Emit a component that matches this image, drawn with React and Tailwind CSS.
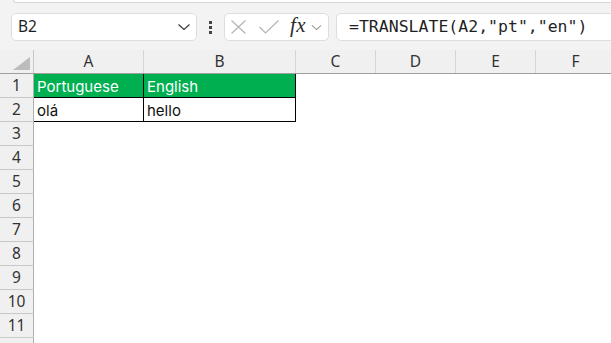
import React from 'react';

const COLS = ['A', 'B', 'C', 'D', 'E', 'F'];
const WIDTHS = ['w-[110px]', 'w-[152px]', 'w-[80px]', 'w-[80px]', 'w-[80px]', 'w-[80px]'];

const Chevron = ({ className, color }) => (
  <svg className={className} viewBox="0 0 12 6" fill="none">
    <path d="M0.5 0.5 L6 5.5 L11.5 0.5" stroke={color} strokeWidth="1.3" />
  </svg>
);

const Toolbar = () => (
  <div className="bg-[#f3f3f3] h-[50px] flex flex-col">
    {/* edge of the ribbon panel above */}
    <div className="ml-[13px] h-[3px] bg-white border-b border-l border-[#d6d6d6] rounded-bl-[5px]" />
    <div className="flex items-center mt-[10px] h-[28px]">
      {/* Name box */}
      <div className="ml-[11px] w-[186px] shrink-0 h-full bg-white border border-[#dedede] rounded-[5px] flex items-center pl-[6px] pr-[6px]">
        <span className="text-[15.5px] text-[#1f1f1f] font-['Noto_Sans',sans-serif] leading-none">B2</span>
        <Chevron className="ml-auto w-[12px] h-[6px]" color="#444" />
      </div>
      {/* grip */}
      <div className="ml-[12px] shrink-0 flex flex-col gap-[2px]">
        <div className="w-[3px] h-[3px] bg-[#444]" />
        <div className="w-[3px] h-[3px] bg-[#444]" />
        <div className="w-[3px] h-[3px] bg-[#444]" />
      </div>
      {/* Cancel / Enter / fx */}
      <div className="ml-[12px] w-[105px] shrink-0 h-full bg-white border border-[#dedede] rounded-[5px] flex items-center">
        <svg className="ml-[5px] w-[17px] h-[14px]" viewBox="0 0 17 14" fill="none">
          <path d="M1.5 0.5 L15.5 13.5 M15.5 0.5 L1.5 13.5" stroke="#b4b4b4" strokeWidth="1.2" />
        </svg>
        <svg className="ml-[12px] w-[20px] h-[14px]" viewBox="0 0 20 14" fill="none">
          <path d="M0.5 7 L6.5 13 L19.5 0.5" stroke="#b4b4b4" strokeWidth="1.2" />
        </svg>
        <span className="ml-[11px] text-[21px] italic text-[#2b2b2b] font-['Liberation_Serif',serif] leading-none -mt-[3px] tracking-[0.5px]">fx</span>
        <Chevron className="ml-[5px] w-[11px] h-[5px]" color="#9a9a9a" />
      </div>
      {/* Formula bar */}
      <div className="ml-[7px] w-[300px] shrink-0 h-full bg-white border border-[#dedede] rounded-l-[5px] flex items-center pl-[12px]">
        <span className="text-[16.5px] text-[#1f1f1f] font-['DejaVu_Sans_Mono',monospace] leading-none whitespace-pre">=TRANSLATE(A2,"pt","en")</span>
      </div>
    </div>
  </div>
);

const HeaderRow = () => (
  <div className="flex h-[24px] bg-[#f0f0f0] border-b border-[#9e9e9e]">
    <div className="w-[34px] shrink-0 border-r border-[#c8c8c8] flex items-end justify-end pr-[3px] pb-[3px]">
      <svg className="w-[17px] h-[13px]" viewBox="0 0 17 13">
        <polygon points="17,0 17,13 0,13" fill="#bcbcbc" />
      </svg>
    </div>
    {COLS.map((c, i) => (
      <div
        key={c}
        className={`${WIDTHS[i]} shrink-0 border-r border-[#d4d4d4] flex items-center justify-center pt-[1px] text-[15.5px] text-[#333] font-['Noto_Sans',sans-serif]`}
      >
        {c}
      </div>
    ))}
  </div>
);

const cellText = "text-[15px] font-['Inter',sans-serif] pl-[3px] pt-[3px] flex items-center";

const Row = ({ n, cells }) => (
  <div className="flex h-[24px]">
    <div className="w-[34px] shrink-0 bg-[#f0f0f0] border-r border-b border-r-[#b0b0b0] border-b-[#c8c8c8] flex items-center justify-center pt-[1px] text-[15.5px] text-[#333] font-['Noto_Sans',sans-serif]">
      {n}
    </div>
    {cells}
  </div>
);

export default function App() {
  const rows = [];
  rows.push(
    <Row
      key={1}
      n={1}
      cells={
        <>
          <div className={`w-[110px] shrink-0 bg-[#00b050] text-white border-r border-b border-black ${cellText}`}>Portuguese</div>
          <div className={`w-[152px] shrink-0 bg-[#00b050] text-white border-r border-b border-black ${cellText}`}>English</div>
        </>
      }
    />
  );
  rows.push(
    <Row
      key={2}
      n={2}
      cells={
        <>
          <div className={`w-[110px] shrink-0 text-[#111] border-r border-b border-black ${cellText}`}>olá</div>
          <div className={`w-[152px] shrink-0 text-[#111] border-r border-b border-black ${cellText}`}>hello</div>
        </>
      }
    />
  );
  for (let n = 3; n <= 11; n++) {
    rows.push(<Row key={n} n={n} cells={null} />);
  }
  // row 12 is cut off by the window; only its header strip shows
  rows.push(<Row key={12} n="" cells={null} />);

  return (
    <div className="w-[611px] h-[343px] overflow-hidden bg-white">
      <Toolbar />
      <HeaderRow />
      {rows}
    </div>
  );
}
